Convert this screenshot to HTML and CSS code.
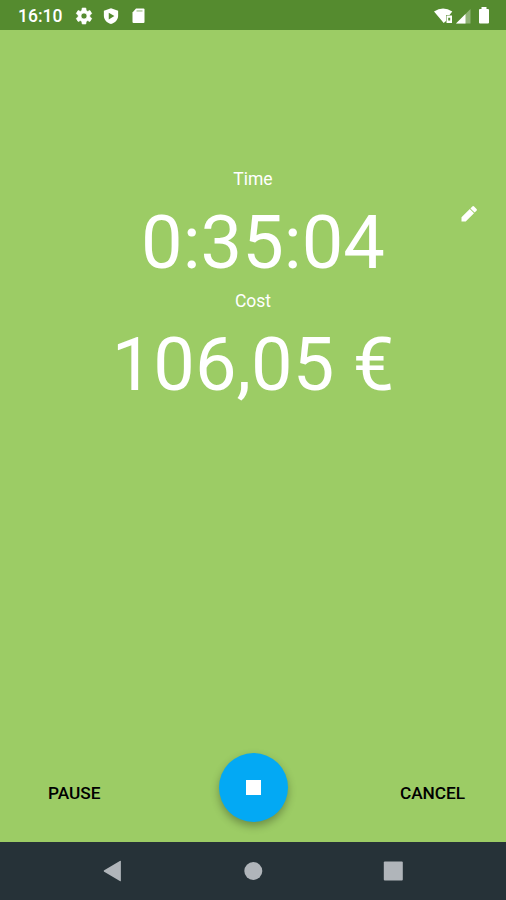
FILE: index.html
```
<!DOCTYPE html>
<html lang="en">
<head>
    <meta charset="UTF-8">
    <meta name="viewport" content="width=device-width, initial-scale=1.0">
    <title>Meeting Cost Timer</title>
    <link rel="stylesheet" href="styles.css">
</head>
<body>
    <div class="screen">
        <header class="status-bar">
            <span class="clock">16:10</span>
            <svg class="icon-gear" width="18" height="18" viewBox="2.500 2 19 20"><path stroke="#fff" stroke-width=".8" stroke-linejoin="round" d="M18.460 13a7.500 7.500 0 0 0 0-2l2.100-1.650-2-3.460-2.490 1a7.300 7.300 0 0 0-1.690-.98L14 3.200h-4l-.38 2.710a7.300 7.300 0 0 0-1.690.98l-2.490-1-2 3.460L5.560 11a7.500 7.500 0 0 0 0 2l-2.120 1.650 2 3.460 2.490-1c.52.4 1.080.73 1.690.98l.38 2.710h4l.38-2.710c.61-.25 1.170-.59 1.690-.98l2.490 1 2-3.460zM12 15.400a3.400 3.400 0 1 1 0-6.800 3.400 3.400 0 0 1 0 6.800z"/></svg>
            <svg class="icon-shield" width="18" height="18" viewBox="0 0 24 24"><path fill-rule="evenodd" d="M12 1.500 2.500 5v6.500c0 5.300 4 9.500 9.500 11 5.500-1.500 9.500-5.700 9.500-11V5zM9 7.500l7.500 4.500L9 16.500z"/></svg>
            <svg class="icon-card" width="14" height="18" viewBox="0 0 14 18"><path fill-rule="evenodd" d="M5 1.500h7.500q1 0 1 1v12.500q0 1-1 1h-10q-1 0-1-1V5.500z"/><path d="M5.500 3.200h6v1.500h-6z" fill="#558b2f" opacity=".45"/></svg>
            <div class="status-right">
                <svg width="20" height="18" viewBox="0 0 20 18"><path d="M0 4.500Q9 -1.500 18.300 4.500L15.500 8H12v6l-2.300 2z"/><path d="M12.500 8.500H18V16h-5.500zM14.200 10.800v2.600h2v-2.600z" fill-rule="evenodd"/></svg>
                <svg class="icon-signal" width="15" height="16" viewBox="0 0 15 16"><path d="M0 15.500 14.500 1v14.500z" opacity=".35"/><path d="M0 15.500 9.500 6v9.500z"/></svg>
                <svg class="icon-battery" width="12" height="17" viewBox="0 0 12 17"><path d="M3.500 0h5v2H10q1 0 1 1v12.500q0 1-1 1H2q-1 0-1-1V3q0-1 1-1h1.500z"/></svg>
            </div>
        </header>

        <main class="timer">
            <div class="label">Time</div>
            <div class="time-row">
                <div class="value time">0:35:04</div>
                <button class="edit" aria-label="Edit">
                    <svg width="16" height="16" viewBox="0 0 16 16"><path d="M.5 11.300 8.800 3l4.200 4.200L4.700 15.500H.5zM9.400 2.400 11.300.5q.9-.9 1.800 0l2.400 2.400q.9.9 0 1.800L13.600 6.600z"/></svg>
                </button>
            </div>
            <div class="label">Cost</div>
            <div class="value cost">106,05 €</div>

            <div class="actions">
                <button class="text-button pause">PAUSE</button>
                <button class="stop" aria-label="Stop"><span class="stop-icon"></span></button>
                <button class="text-button cancel">CANCEL</button>
            </div>
        </main>

        <nav class="nav-bar">
            <svg width="20" height="22" viewBox="0 0 20 22"><path d="M1.200 10.200 16.800.9q1.100-.5 1.100.7v18.800q0 1.200-1.100.7L1.200 11.800q-1.200-.8 0-1.600z"/></svg>
            <svg width="20" height="22" viewBox="0 0 20 22"><circle cx="10.300" cy="11" r="9"/></svg>
            <svg width="20" height="22" viewBox="0 0 20 22"><rect x=".8" y="1.500" width="19" height="19" rx="1"/></svg>
        </nav>
    </div>
</body>
</html>
```

FILE: styles.css
```
body {
    margin: 0;
    font-family: Roboto, sans-serif;
}
button {
    padding: 0;
    border: none;
    background: none;
    font-family: inherit;
    cursor: pointer;
}
svg {
    display: block;
    flex: none;
}
.screen {
    display: flex;
    flex-direction: column;
    height: 900px;
    background-color: #9ccc65;
}
.status-bar {
    display: flex;
    align-items: center;
    box-sizing: border-box;
    height: 30px;
    padding: 1px 16px 0 18px;
    background-color: #558b2f;
    color: #fff;
    fill: #fff;
}
.clock {
    width: 57px;
    font-size: 17.5px;
    font-weight: 500;
    line-height: 30px;
}
.icon-shield {
    margin-left: 9px;
}
.icon-card {
    margin-left: 11px;
}
.status-right {
    display: flex;
    align-items: center;
    margin-left: auto;
}
.icon-signal {
    margin-left: 2px;
}
.icon-battery {
    margin-left: 7px;
}
.timer {
    display: flex;
    flex: 1;
    flex-direction: column;
    padding-top: 139px;
    color: #fff;
}
.label {
    height: 21px;
    font-size: 17.5px;
    line-height: 21px;
    text-align: center;
}
.value {
    font-size: 74px;
    line-height: 105px;
    text-align: center;
}
.time-row {
    display: grid;
    grid-template-columns: 46px 1fr 26px;
    height: 101px;
}
.time {
    grid-column: 2;
}
.edit {
    display: flex;
    align-items: flex-start;
    width: 26px;
    margin-left: -19px;
    padding-top: 16px;
    fill: #fff;
}
.actions {
    display: grid;
    grid-template-columns: 171px 69px 1fr;
    align-items: center;
    margin-top: auto;
    padding: 0 41px 20px 48px;
}
.text-button {
    height: 40px;
    margin-top: 10px;
    color: #000;
    font-size: 17.3px;
    font-weight: 500;
    letter-spacing: -0.05px;
}
.pause {
    justify-self: start;
}
.cancel {
    justify-self: end;
}
.stop {
    display: flex;
    align-items: center;
    justify-content: center;
    width: 69px;
    height: 69px;
    border-radius: 50%;
    background-color: #03a9f4;
    box-shadow: 0 4px 8px rgba(0, 0, 0, 0.3);
}
.stop-icon {
    width: 15px;
    height: 15px;
    background-color: #fff;
}
.nav-bar {
    display: flex;
    align-items: center;
    justify-content: space-between;
    box-sizing: border-box;
    height: 58px;
    padding: 0 103px;
    background-color: #263238;
    fill: #b0b5ba;
}
```
